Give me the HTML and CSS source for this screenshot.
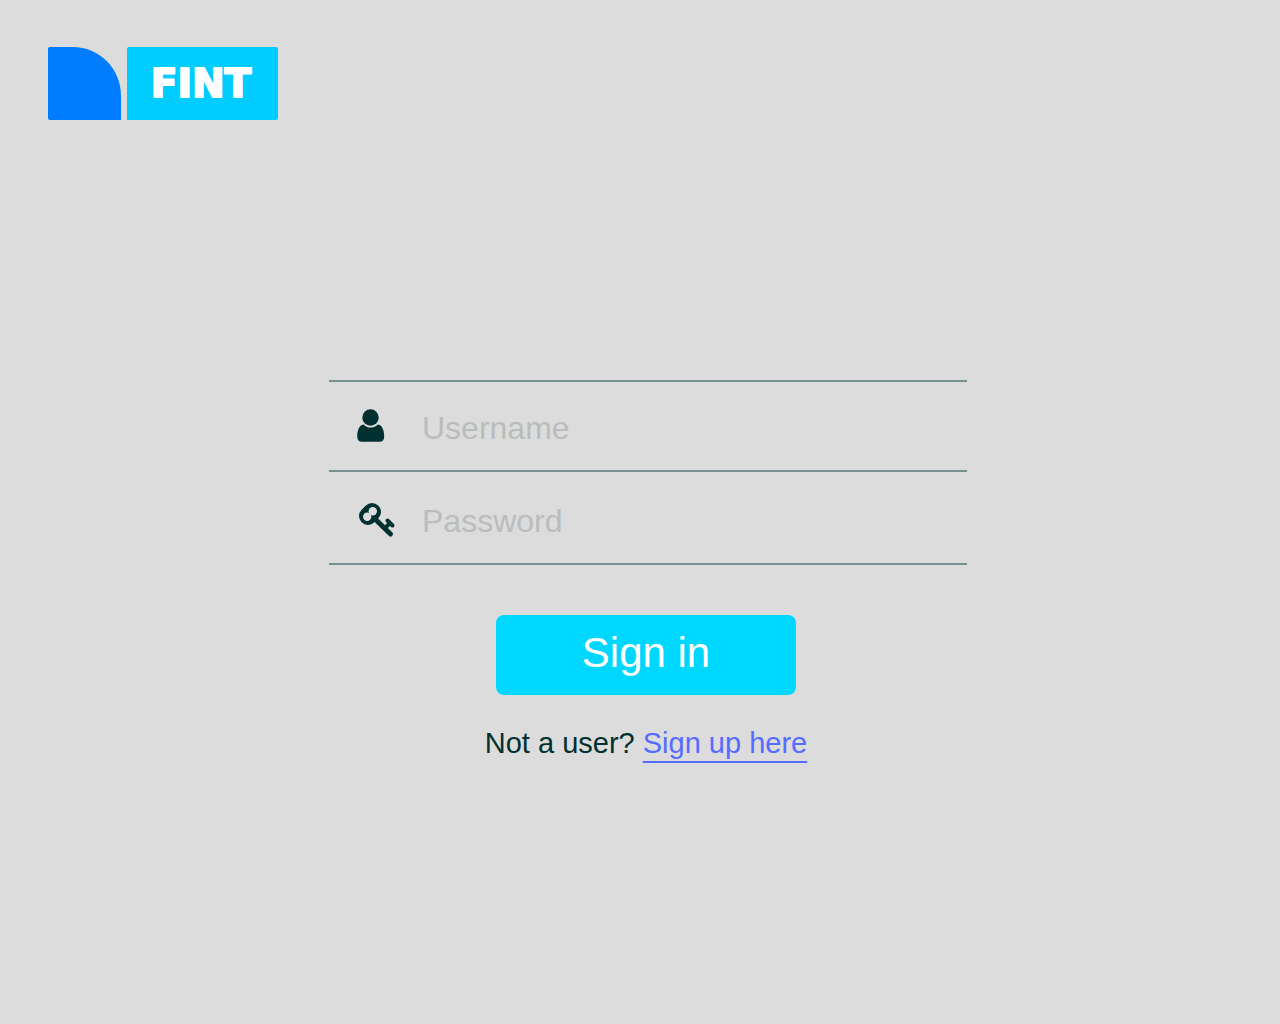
FILE: index.html
```html
<!DOCTYPE html>
<html lang="en">
<head>
<meta charset="utf-8">
<meta name="viewport" content="width=device-width, initial-scale=1">
<title>Fint – Sign in</title>
<link rel="stylesheet" href="styles.css">
</head>
<body>
<header class="header">
  <svg class="logo" viewBox="0 0 230 73" role="img" aria-label="Fint">
    <path fill="#007dff" d="M2 0H25A48 49 0 0 1 73 49V73H2a2 2 0 0 1-2-2V2a2 2 0 0 1 2-2z"/>
    <path fill="#0cf" d="M81 0H228a2 2 0 0 1 2 2V71a2 2 0 0 1-2 2H79V2a2 2 0 0 1 2-2z"/>
    <text class="logo-text" x="153" y="50">FINT</text>
  </svg>
</header>
<main class="main">
  <form class="form">
    <div class="field">
      <label class="field-icon" for="username" aria-label="Username">
        <svg width="40" height="40" viewBox="0 0 40 40" aria-hidden="true">
          <circle cx="13.500" cy="11.500" r="8.200" fill="#00302f"/>
          <path fill="#00302f" d="M6.500 18.500C9 21 11.500 21.500 13.500 21.500S18.500 21 21 18.500C25.500 19 27.200 25 27.200 30.500C27.200 34 25.500 35.800 22.500 35.800H5C2 35.800 .2 34 .2 30.500C.2 25 2 19 6.500 18.500z"/>
        </svg>
      </label>
      <input class="field-input" id="username" type="text" placeholder="Username" autocomplete="username">
    </div>
    <div class="field field-password">
      <label class="field-icon" for="password" aria-label="Password">
        <svg width="40" height="40" viewBox="0 0 40 40" aria-hidden="true">
          <g fill="none" stroke="#00302f" stroke-linecap="round">
            <path stroke-width="18" d="M15 13L11 17"/>
            <path stroke-width="5" d="M17 19L33.500 35"/>
            <path stroke-width="4" d="M30.500 21.500L35.500 26.500M33 24L29 28"/>
          </g>
          <circle cx="15.800" cy="12.200" r="4.200" fill="#dcdcdc"/>
          <circle cx="10.200" cy="17.800" r="4.200" fill="#dcdcdc"/>
        </svg>
      </label>
      <input class="field-input" id="password" type="password" placeholder="Password" autocomplete="current-password">
    </div>
    <div class="actions">
      <button class="submit" type="submit">Sign in</button>
      <p class="signup">Not a user? <a class="signup-link" href="#signup">Sign up here</a></p>
    </div>
  </form>
</main>
</body>
</html>
```
FILE: styles.css
```css
* {
  box-sizing: border-box;
}

body {
  margin: 0;
  min-height: 100vh;
  background: #dcdcdc;
  color: #00302f;
  font-family: "Liberation Sans", Arial, sans-serif;
}

.header {
  padding: 47px 48px 0;
}

.logo {
  display: block;
  width: 230px;
  height: 73px;
}

.logo-text {
  fill: #fff;
  stroke: #fff;
  stroke-width: 2px;
  stroke-linejoin: round;
  font-family: "DejaVu Sans", sans-serif;
  font-size: 39px;
  font-weight: 700;
  text-anchor: middle;
}

.main {
  padding: 260px 16px 48px 32px;
}

.form {
  max-width: 638px;
  margin: 0 auto;
  border-top: 2px solid #78908f;
}

.field {
  display: flex;
  align-items: center;
  gap: 25px;
  height: 90px;
  padding-left: 28px;
  border-bottom: 2px solid #78908f;
}

.field-password {
  height: 93px;
  padding-top: 3px;
}

.field-icon {
  display: flex;
}

.field-input {
  flex: 1;
  min-width: 0;
  height: 64px;
  padding: 4px 0 0;
  border: 0;
  outline: 0;
  background: transparent;
  color: #00302f;
  font: inherit;
  font-size: 32px;
}

.field-input::placeholder {
  color: #b9bdbc;
  opacity: 1;
}

.actions {
  display: flex;
  flex-direction: column;
  align-items: center;
  gap: 28px;
  padding: 50px 4px 0 0;
}

.submit {
  width: 300px;
  max-width: 100%;
  height: 80px;
  padding: 0 0 4px;
  border: 0;
  border-radius: 8px;
  background: #00d7ff;
  color: #fff;
  font: inherit;
  font-size: 42px;
  cursor: pointer;
}

.signup {
  margin: 0;
  font-size: 29px;
  line-height: 40px;
}

.signup-link {
  color: #566bff;
  text-decoration: underline;
  text-decoration-thickness: 2px;
  text-underline-offset: 8px;
  text-decoration-skip-ink: none;
}
```
